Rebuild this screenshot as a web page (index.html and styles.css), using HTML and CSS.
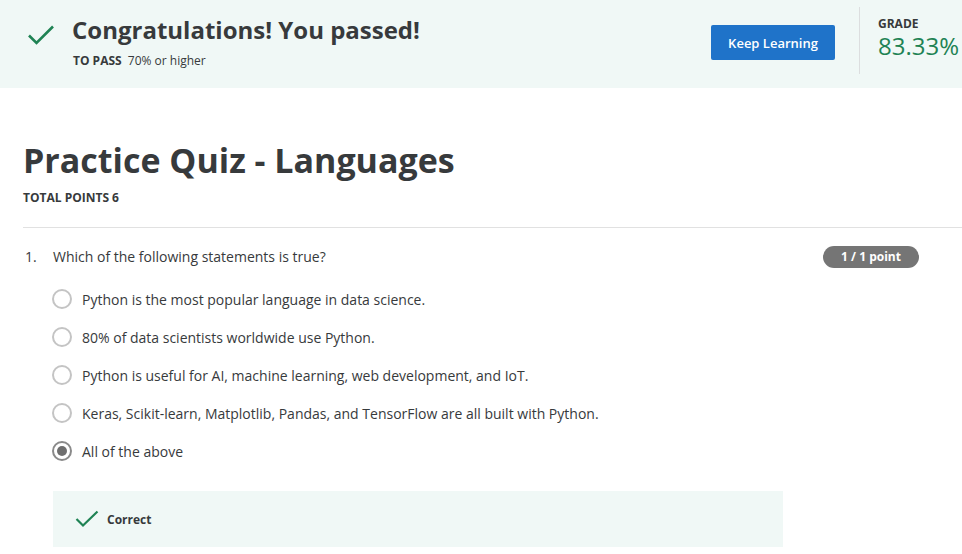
FILE: index.html
```html
<!DOCTYPE html>
<html>
<head>
<meta charset="utf-8">
<link rel="stylesheet" href="styles.css">
</head>
<body>
<header class="banner">
  <div class="banner-left">
    <svg class="check-lg" width="28" height="22" viewBox="0 0 28 22"><path d="M2 11.5 L9.5 19 L26 2.5" fill="none" stroke="#1f8354" stroke-width="2.6"/></svg>
    <div class="banner-text">
      <h1 class="banner-title">Congratulations! You passed!</h1>
      <div class="banner-sub"><span class="sub-label">TO PASS</span> 70% or higher</div>
    </div>
  </div>
  <div class="banner-right">
    <button class="btn-primary">Keep Learning</button>
    <div class="vdivider"></div>
    <div class="grade">
      <div class="grade-label">GRADE</div>
      <div class="grade-value">83.33%</div>
    </div>
  </div>
</header>
<main class="content">
  <h2 class="quiz-title">Practice Quiz - Languages</h2>
  <div class="total">TOTAL POINTS 6</div>
  <hr class="rule">
  <section class="question">
    <div class="q-head">
      <span class="q-num">1.</span>
      <span class="q-text">Which of the following statements is true?</span>
      <span class="pill">1 / 1 point</span>
    </div>
    <ul class="options">
      <li class="option"><span class="radio"></span>Python is the most popular language in data science.</li>
      <li class="option"><span class="radio"></span>80% of data scientists worldwide use Python.</li>
      <li class="option"><span class="radio"></span>Python is useful for AI, machine learning, web development, and IoT.</li>
      <li class="option"><span class="radio"></span>Keras, Scikit-learn, Matplotlib, Pandas, and TensorFlow are all built with Python.</li>
      <li class="option"><span class="radio checked"></span>All of the above</li>
    </ul>
    <div class="feedback">
      <svg class="check-sm" width="24" height="18" viewBox="0 0 24 18"><path d="M1.5 9 L8 15.5 L22.5 1.5" fill="none" stroke="#1f8354" stroke-width="2.2"/></svg>
      <span class="feedback-text">Correct</span>
    </div>
  </section>
</main>
</body>
</html>
```

FILE: styles.css
```css
* { box-sizing: border-box; }
html, body { margin: 0; padding: 0; background: #fff; }
body {
  font-family: "Open Sans", "Liberation Sans", sans-serif;
  color: #373a3c;
  width: 962px;
  height: 554px;
  overflow: hidden;
}
.banner {
  background: #f0f8f6;
  height: 88px;
  display: flex;
  justify-content: space-between;
  padding-left: 27px;
}
.banner-left {
  display: flex;
  align-items: flex-start;
}
.check-lg { margin-top: 24px; }
.banner-text { margin-left: 17px; padding-top: 13px; }
.banner-title {
  margin: 0;
  font-size: 24px;
  font-weight: 700;
  line-height: 34px;
  color: #373a3c;
}
.banner-sub {
  font-size: 12px;
  margin-top: 5px;
  margin-left: 1px;
  color: #373a3c;
}
.sub-label { font-weight: 700; margin-right: 3px; }
.banner-right {
  display: flex;
  align-items: flex-start;
}
.btn-primary {
  margin-top: 25px;
  width: 124px;
  height: 35px;
  background: #1f73c9;
  color: #fff;
  border: none;
  border-radius: 2px;
  font-family: "Open Sans", "Liberation Sans", sans-serif;
  font-size: 13px;
  font-weight: 600;
  padding: 0;
}
.vdivider {
  width: 1px;
  height: 67px;
  margin-top: 7px;
  margin-left: 24px;
  background: #dcdedf;
}
.grade { margin-left: 18px; padding-top: 16px; width: 84px; }
.grade-label { font-size: 12px; font-weight: 700; line-height: 16px; }
.grade-value { font-size: 24px; line-height: 26px; color: #1f8354; margin-top: 1px; }

.content { padding-left: 23px; }
.quiz-title {
  margin: 0;
  padding-top: 48px;
  font-size: 34px;
  line-height: 48px;
  font-weight: 700;
  color: #373a3c;
}
.total {
  font-size: 12px;
  font-weight: 700;
  margin-top: 6px;
  line-height: 16px;
}
.rule {
  border: none;
  border-top: 1px solid #e1e1e1;
  margin: 21px 0 0 0;
}
.question { padding-top: 18px; }
.q-head {
  display: flex;
  align-items: center;
  font-size: 14px;
  line-height: 22px;
  width: 896px;
}
.q-num { width: 30px; padding-left: 2px; }
.q-text { flex: 1; }
.pill {
  background: #757575;
  color: #fff;
  font-size: 12px;
  font-weight: 700;
  border-radius: 12px;
  height: 22px;
  line-height: 22px;
  width: 96px;
  text-align: center;
}
.options {
  list-style: none;
  margin: 12px 0 0 0;
  padding: 0 0 0 29px;
}
.option {
  display: flex;
  align-items: center;
  font-size: 14px;
  height: 38px;
  color: #373a3c;
}
.radio {
  width: 20px;
  height: 20px;
  border: 2px solid #c4c4c4;
  border-radius: 50%;
  margin-right: 10px;
  position: relative;
  flex: none;
}
.radio.checked { border-color: #8a8a8a; }
.radio.checked::after {
  content: "";
  position: absolute;
  left: 3px; top: 3px;
  width: 10px; height: 10px;
  border-radius: 50%;
  background: #6e6e6e;
}
.feedback {
  margin: 21px 0 0 30px;
  width: 730px;
  height: 56px;
  background: #f0f8f6;
  display: flex;
  align-items: center;
  padding-left: 22px;
}
.check-sm { margin-right: 8px; }
.feedback-text { font-size: 12px; font-weight: 700; }
```
